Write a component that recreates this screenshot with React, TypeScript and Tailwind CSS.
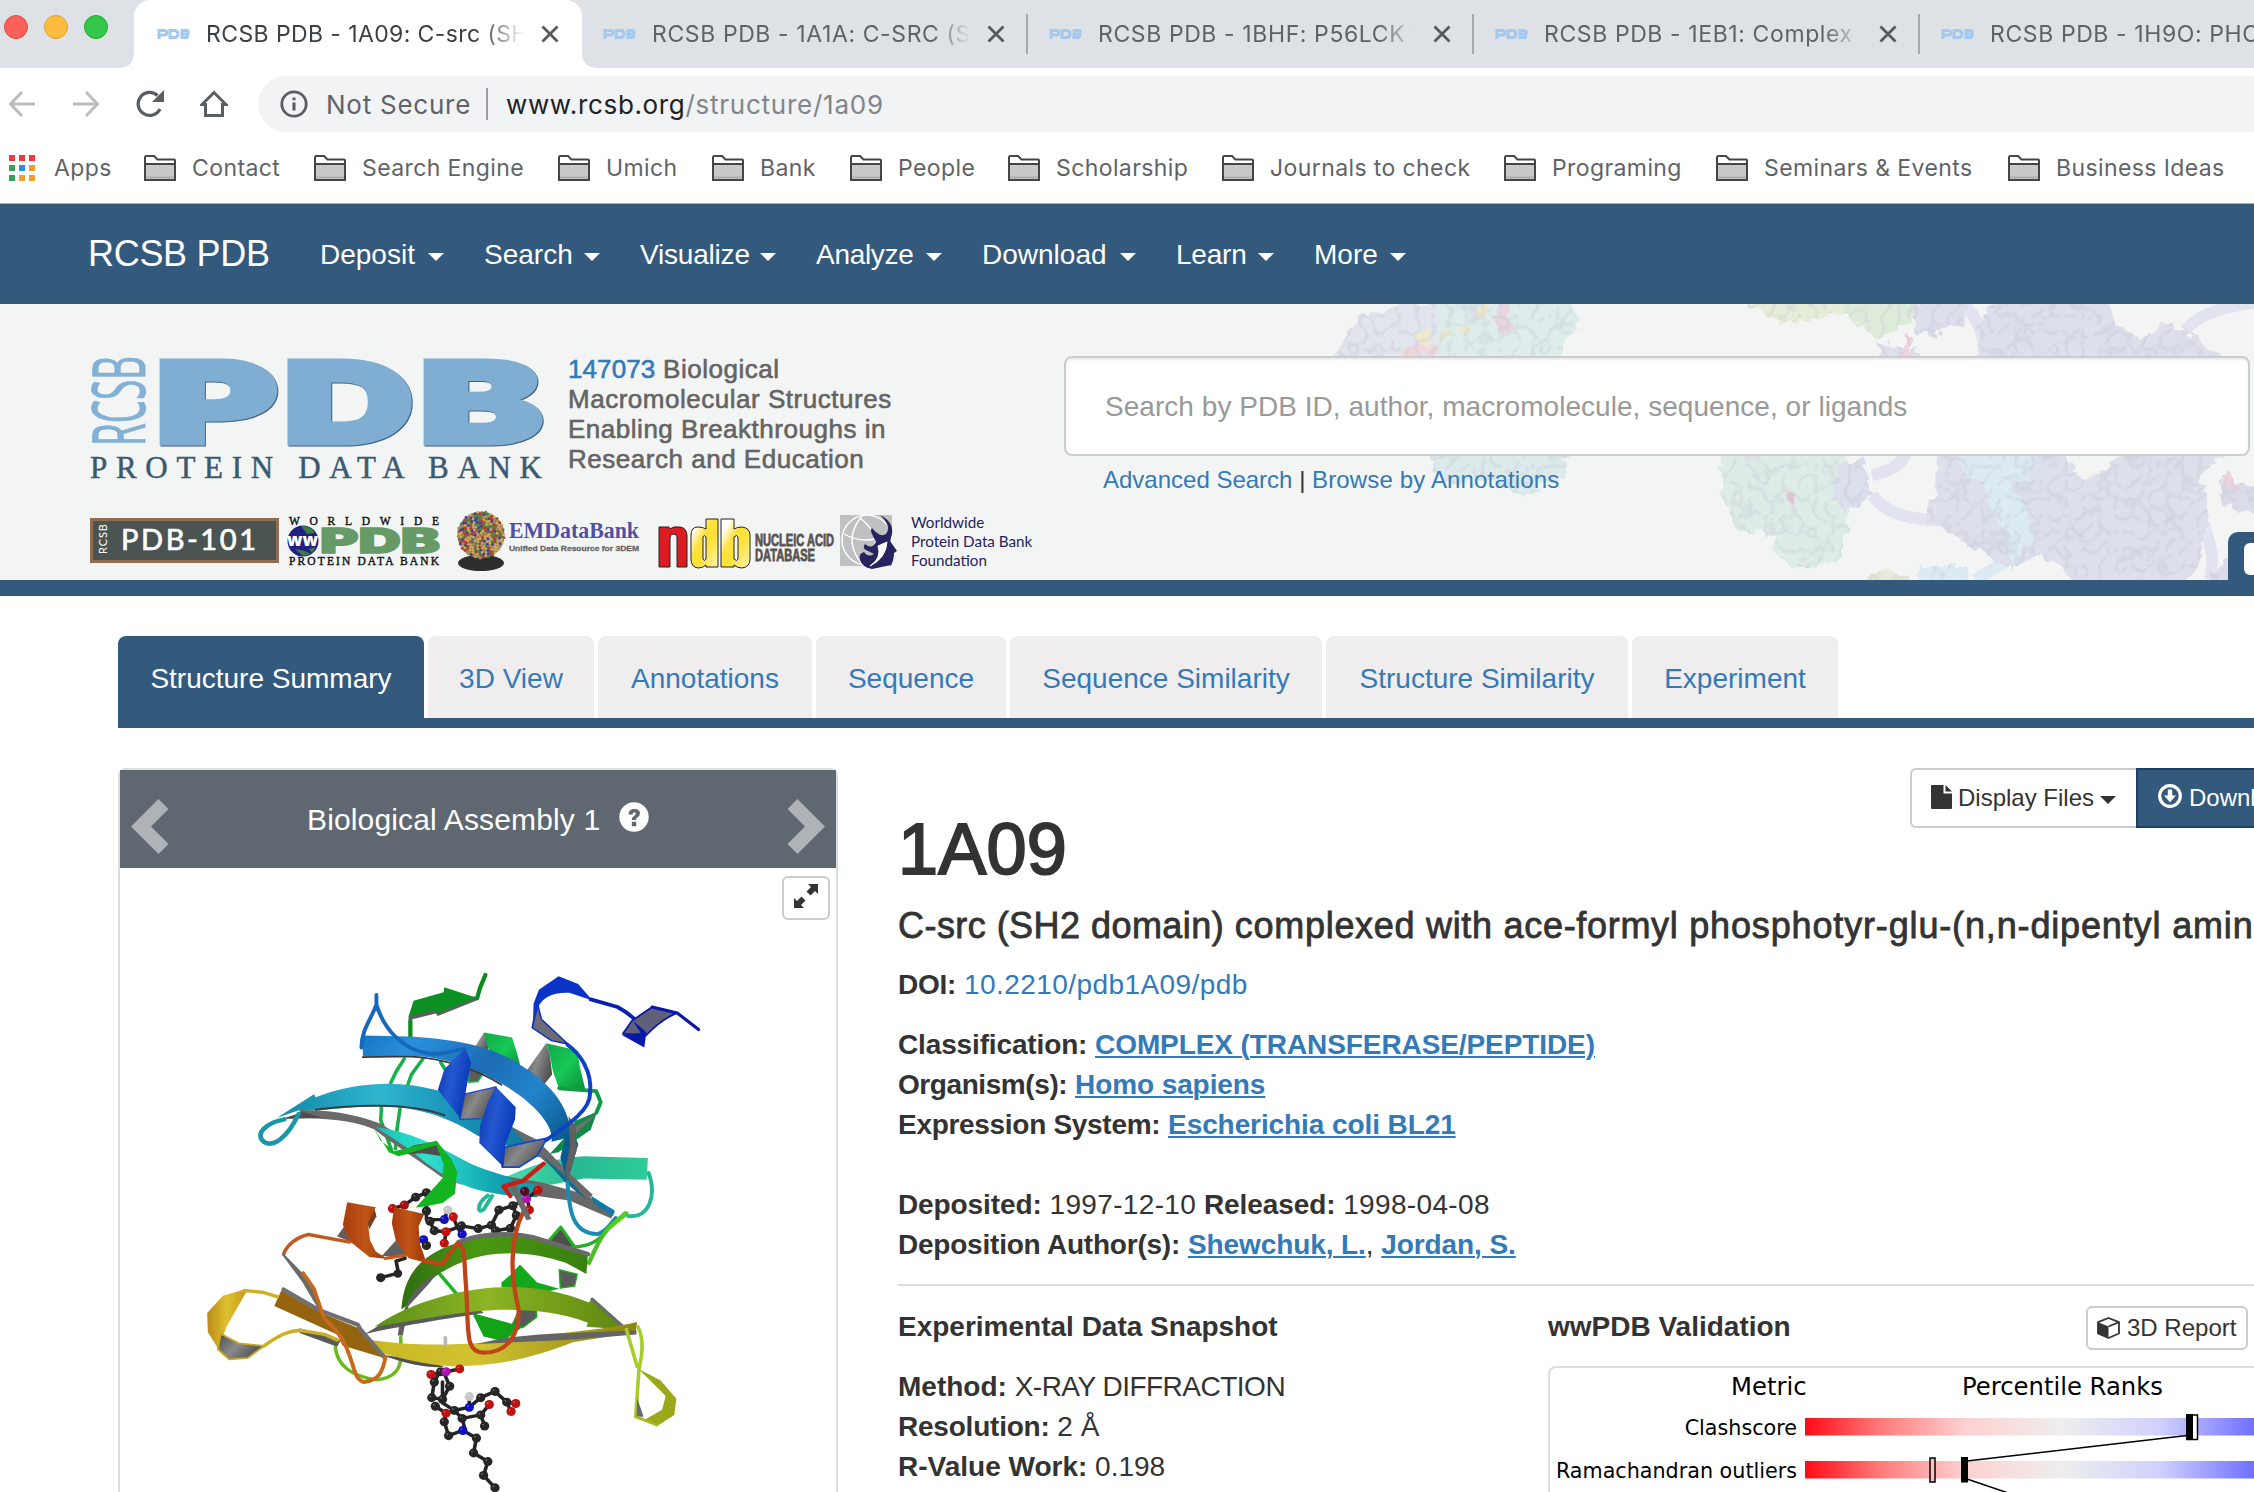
import React from "react";

const SANS = "font-['Liberation_Sans',Arial,sans-serif]";

/* ---------- Browser chrome ---------- */

const browserTabs = [
  "RCSB PDB - 1A09: C-src (SH2 dom",
  "RCSB PDB - 1A1A: C-SRC (SH2 DOM",
  "RCSB PDB - 1BHF: P56LCK SH2 D",
  "RCSB PDB - 1EB1: Complex struct",
  "RCSB PDB - 1H9O: PHOSPHATID",
];

function CloseIcon() {
  return (
    <svg className="h-[18px] w-[18px]" viewBox="0 0 18 18" fill="none" stroke="#55585c" strokeWidth="2.8">
      <path d="M1.5 1.5 16.5 16.5M16.5 1.5 1.5 16.5" />
    </svg>
  );
}

function PdbFavicon() {
  return (
    <svg className="h-[10px] w-[33px] shrink-0" viewBox="0 0 33 10" fill="none" stroke="#a3c9ee" strokeWidth="3">
      <path d="M2 10V1.500H7.500a2 2 0 0 1 0 4.500H2M13 1.500V8.500H18q3-.500 3-3.500t-3-3.500ZM25 1.500V8.500H29.500a1.800 1.800 0 0 0 0-3.500 1.700 1.700 0 0 0 0-3.500ZM25 5h5" />
    </svg>
  );
}

function TabStrip() {
  return (
    <div className="flex h-[68px] w-[2400px] shrink-0 bg-[#dee1e6]">
      <div className="flex w-[118px] shrink-0 gap-4 pl-1 pt-[15px]">
        <span className="h-6 w-6 shrink-0 rounded-full border border-[#e2463f] bg-[#fc605b]" />
        <span className="h-6 w-6 shrink-0 rounded-full border border-[#dfa023] bg-[#fdbc40]" />
        <span className="h-6 w-6 shrink-0 rounded-full border border-[#1dad2b] bg-[#34c84a]" />
      </div>
      {browserTabs.map((title, i) => (
        <div key={title} className={i === 0 ? "flex w-[480px] shrink-0" : "flex w-[446px] shrink-0"}>
          {i === 0 && (
            <svg className="h-[68px] w-4 shrink-0" viewBox="0 0 16 68">
              <path d="M0 68Q16 68 16 52V0V68Z" fill="#fff" />
            </svg>
          )}
          <div
            className={
              i === 0
                ? "flex h-[68px] w-[448px] shrink-0 items-center rounded-t-[16px] bg-white pl-[23px] text-[#3c4043]"
                : "flex h-[68px] w-[446px] shrink-0 items-center pl-[5px] text-[#5f6368]"
            }
          >
            <PdbFavicon />
            <span
              className={
                i === 0
                  ? "ml-4 w-[318px] shrink-0 overflow-hidden whitespace-nowrap font-['Inter',sans-serif] text-[23px] tracking-[0.4px] [mask-image:linear-gradient(to_right,#000_86%,transparent_100%)]"
                  : "ml-4 w-[318px] shrink-0 overflow-hidden whitespace-nowrap font-['Inter',sans-serif] text-[23px] tracking-[0.6px] [mask-image:linear-gradient(to_right,#000_88%,transparent_100%)]"
              }
            >
              {title}
            </span>
            <span className="ml-[17px]">
              <CloseIcon />
            </span>
            {i > 0 && <span className="ml-[21px] h-10 w-[2px] bg-[#a4a7ab]" />}
          </div>
          {i === 0 && (
            <svg className="h-[68px] w-4 shrink-0" viewBox="0 0 16 68">
              <path d="M16 68Q0 68 0 52V0V68Z" fill="#fff" />
            </svg>
          )}
        </div>
      ))}
    </div>
  );
}

function Toolbar() {
  return (
    <div className="flex h-[64px] w-[2400px] shrink-0 items-start bg-white pt-2 font-['Inter',sans-serif]">
      <div className="flex h-14 w-[258px] items-center pl-[8px]">
        <svg className="h-7 w-7" viewBox="0 0 28 28" fill="none" stroke="#babcbe" strokeWidth="3">
          <path d="M27 14H3M14 2 2.500 14 14 26" />
        </svg>
        <svg className="ml-9 h-7 w-7" viewBox="0 0 28 28" fill="none" stroke="#babcbe" strokeWidth="3">
          <path d="M1 14H25M14 2 25.500 14 14 26" />
        </svg>
        <svg className="ml-9 h-7 w-7" viewBox="0 0 28 28" fill="none" stroke="#5a5d61" strokeWidth="3.300">
          <path d="M24 19A11.500 11.500 0 1 1 21.500 5.500" />
          <path d="M28 0V12H16Z" fill="#5a5d61" stroke="none" />
        </svg>
        <svg className="ml-9 h-7 w-7" viewBox="0 0 28 28" fill="none" stroke="#5a5d61" strokeWidth="3">
          <path d="M2 14.500 14 2.500 26 14.500H22.500V25.500H5.500V14.500Z" />
        </svg>
      </div>
      <div className="flex h-14 flex-1 items-center rounded-l-full bg-[#f1f3f4] pl-[22px] text-[26px] tracking-[0.75px] text-[#5f6368]">
        <svg className="h-7 w-7 shrink-0" viewBox="0 0 28 28" fill="none" stroke="#5a5d61" strokeWidth="2.800">
          <circle cx="14" cy="14" r="12.200" />
          <path d="M14 12.500V20.500M14 7.500V10.300" strokeWidth="3" />
        </svg>
        <span className="ml-[18px] w-[160px] whitespace-nowrap">Not Secure</span>
        <span className="h-8 w-[2px] bg-[#9a9da1]" />
        <span className="ml-[18px] whitespace-nowrap text-[#80868b]">
          <span className="tracking-[0.65px] text-[#202124]">www.rcsb.org</span>/structure/1a09
        </span>
      </div>
    </div>
  );
}

const bookmarks: [string, string][] = [
  ["Contact", "w-[121px]"],
  ["Search Engine", "w-[195px]"],
  ["Umich", "w-[105px]"],
  ["Bank", "w-[89px]"],
  ["People", "w-[109px]"],
  ["Scholarship", "w-[165px]"],
  ["Journals to check", "w-[233px]"],
  ["Programing", "w-[163px]"],
  ["Seminars & Events", "w-[243px]"],
  ["Business Ideas", "w-[200px]"],
];

function BookmarkBar() {
  const dots = ["#ee3a38", "#ee3a38", "#ee3a38", "#35a35a", "#2a8cf0", "#eda02a", "#35a35a", "#eda02a", "#eda02a"];
  return (
    <div className="flex h-[72px] w-[2400px] shrink-0 items-center border-b border-[#b2b2b2] bg-white font-['Inter',sans-serif] text-[23px] tracking-[0.4px] text-[#5f6368]">
      <svg className="ml-[9px] h-[26px] w-[26px]" viewBox="0 0 26 26">
        {dots.map((c, i) => (
          <rect key={i} x={(i % 3) * 10} y={Math.floor(i / 3) * 10} width="6" height="6" fill={c} />
        ))}
      </svg>
      <span className="ml-[19px] w-[90px] pt-[2px]">Apps</span>
      {bookmarks.map(([label, width]) => (
        <React.Fragment key={label}>
          <svg className="h-[26px] w-8 shrink-0" viewBox="0 0 32 26" stroke="#454545" strokeWidth="2">
            <path d="M1 24V2.500Q1 1 2.500 1H10L13.500 4.500H30Q31 4.500 31 5.500V24Z" fill="#fff" />
            <path d="M1 9H31V25H1Z" fill="#c8c8c8" />
            <path d="M2 22.500H30" stroke="#adadad" strokeWidth="1.600" />
          </svg>
          <span className={`ml-[16px] mr-px shrink-0 whitespace-nowrap pt-[2px] ${width}`}>{label}</span>
        </React.Fragment>
      ))}
    </div>
  );
}

/* ---------- Site navigation ---------- */

function Caret({ className }: { className?: string }) {
  return (
    <svg className={`h-2 w-4 shrink-0 ${className ?? ""}`} viewBox="0 0 16 8" fill="currentColor">
      <path d="M0 0H16L8 8Z" />
    </svg>
  );
}

function NavBar() {
  const items: [string, string][] = [
    ["Deposit", "w-[124px]"],
    ["Search", "w-[116px]"],
    ["Visualize", "w-[136px] tracking-[-0.2px]"],
    ["Analyze", "w-[126px] tracking-[-0.3px]"],
    ["Download", "w-[154px]"],
    ["Learn", "w-[98px] tracking-[-0.2px]"],
    ["More", "w-[92px]"],
  ];
  return (
    <nav className="flex h-[100px] shrink-0 items-center bg-[#33597d] pl-[88px] text-white">
      <span className="w-[232px] text-[36px] tracking-[-0.3px]">RCSB PDB</span>
      <div className="flex gap-10 pt-[2px]">
        {items.map(([item, width]) => (
          <span key={item} className={`flex items-center justify-between whitespace-nowrap text-[28px] ${width}`}>
            {item}
            <Caret className="mt-[3px]" />
          </span>
        ))}
      </div>
    </nav>
  );
}

/* ---------- Header artwork ---------- */

function MoleculeBackdrop() {
  return (
    <svg className="absolute inset-0 h-[276px] w-[2254px]" viewBox="0 304 2254 276">
      <defs>
        <filter id="surface" x="-5%" y="-5%" width="110%" height="110%">
          <feTurbulence type="fractalNoise" baseFrequency="0.09" numOctaves="2" seed="4" result="n" />
          <feDisplacementMap in="SourceGraphic" in2="n" scale="16" xChannelSelector="R" yChannelSelector="G" result="d" />
          <feTurbulence type="turbulence" baseFrequency="0.06" numOctaves="2" seed="9" result="t" />
          <feColorMatrix in="t" type="matrix" values="0 0 0 0 0.5  0 0 0 0 0.52  0 0 0 0 0.58  -1.600 0 0 0 0.38" result="c" />
          <feComposite in="c" in2="d" operator="in" result="veins" />
          <feMerge>
            <feMergeNode in="d" />
            <feMergeNode in="veins" />
          </feMerge>
        </filter>
      </defs>
      <g fill="none" stroke="#e1e4ee" strokeWidth="12">
        <path d="M1965 306Q1985 325 1984 356" />
        <path d="M2185 330Q2205 308 2254 303" />
        <path d="M1872 475Q1900 470 1906 452M1872 495Q1890 520 1940 520" />
        <path d="M2205 530Q2216 555 2210 580" />
      </g>
      <path d="M1975 580L2005 562" stroke="#dcebf3" strokeWidth="12" />
      <g filter="url(#surface)">
        <path d="M1333 362L1342 338 1362 316 1400 306 1450 300V362Z" fill="#e2e4ee" />
        <path d="M1440 300H1568L1580 326 1562 340V362H1436Z" fill="#dfecec" />
        <path d="M1426 450H1570L1564 478 1522 494 1490 482 1440 480Z" fill="#dceaeb" />
        <path d="M1745 300H1845V310L1810 322 1775 320Z" fill="#e6edd9" />
        <path d="M1838 300H1922L1912 322 1880 338 1852 322Z" fill="#deebda" />
        <path d="M1916 300H1966L1964 326 1934 334 1914 332Z" fill="#dde0eb" />
        <path d="M1876 342L1920 350V362H1884Z" fill="#dde0eb" />
        <path d="M1990 300H2106L2122 330 2145 338 2166 324 2192 334 2224 358V364H1976L1980 330Z" fill="#dde0eb" />
        <path d="M1720 450H1846L1848 520 1840 556 1808 572 1782 562 1768 534 1736 530 1724 500Z" fill="#deece8" />
        <path d="M1838 462L1862 458 1872 490 1854 510 1834 500Z" fill="#dcdfec" />
        <path d="M1940 450H2064L2084 480 2110 466 2130 450H2230L2200 475 2208 520 2200 560 2180 590H2076L2064 566 2040 554 2008 566 1976 550 1930 520Z" fill="#dde0eb" />
        <path d="M1950 450H2036L2030 480 2004 480 2022 500 2034 538 2012 570 2006 538 1984 490Z" fill="#dcebf2" />
        <path d="M1918 566H1966L1974 590H1918Z" fill="#dcebf3" />
        <path d="M1866 580L1884 568 1916 582V590H1860Z" fill="#e4ebd6" />
        <path d="M2222 480L2260 486V516L2220 504Z" fill="#dadde9" />
        <path d="M2210 574L2230 560V590H2206Z" fill="#dadde9" />
      </g>
      <g filter="url(#surface)">
        <path d="M1404 356Q1414 348 1432 350" stroke="#f2d7dc" strokeWidth="9" strokeLinecap="round" />
        <path d="M1504 310V328" stroke="#e8d5e2" strokeWidth="12" strokeLinecap="round" />
        <path d="M1908 340V354" stroke="#eed3df" strokeWidth="8" strokeLinecap="round" />
        <path d="M2226 476L2236 488" stroke="#eed3df" strokeWidth="8" strokeLinecap="round" />
        <circle cx="1792" cy="500" r="5" fill="#e8c5d4" />
        <g fill="#efe9cc">
          <circle cx="1424" cy="338" r="7" />
          <circle cx="1445" cy="336" r="5" />
          <circle cx="1466" cy="328" r="5" />
          <circle cx="1482" cy="312" r="5" />
        </g>
      </g>
    </svg>
  );
}

function PdbLogo() {
  return (
    <svg className="h-[130px] w-[460px] shrink-0" viewBox="0 0 460 130">
      <text
        transform="translate(56 92) rotate(-90)"
        fontFamily="Open Sans"
        fontSize="74"
        fill="#83b0d5"
        stroke="#83b0d5"
        textLength="90"
        lengthAdjust="spacingAndGlyphs"
      >
        RCSB
      </text>
      <g
        className="[filter:drop-shadow(1.5px_1.5px_0.5px_#3f6284)]"
        fill="#80aed3"
        stroke="#80aed3"
        strokeWidth="5"
        fontFamily="Inter"
        fontWeight="900"
        fontSize="113"
      >
        <text x="66" y="88.500" textLength="123" lengthAdjust="spacingAndGlyphs">P</text>
        <text x="194" y="88.500" textLength="131" lengthAdjust="spacingAndGlyphs">D</text>
        <text x="330" y="88.500" textLength="124" lengthAdjust="spacingAndGlyphs">B</text>
      </g>
      <text x="1" y="124" fontFamily="Liberation Serif" fontSize="31" fill="#3b5a72" stroke="#3b5a72" strokeWidth="0.500" textLength="452">
        PROTEIN DATA BANK
      </text>
    </svg>
  );
}

const virusColors = ["#b08b5a", "#c03030", "#3c8c3c", "#3b3ba8", "#d8b04a", "#8c5a3c", "#c8a878"];
const virusDots = Array.from({ length: 260 }, (_, i) => {
  const r = 23.5 * Math.sqrt((i + 0.5) / 260);
  const a = i * 2.39996;
  const hash = Math.abs(Math.sin(i * 78.233) * 43758.5453);
  return { x: 25 + r * Math.cos(a), y: 25 + r * Math.sin(a), c: virusColors[Math.floor(hash) % 7] };
});

function PartnerLogos() {
  return (
    <div className="flex h-[66px] items-start">
      <svg className="ml-px mt-[8px] h-[47px] w-[190px]" viewBox="0 0 190 47">
        <rect x="1.500" y="2.500" width="186" height="42" fill="#4b5450" stroke="#8f6d50" strokeWidth="3" />
        <text transform="translate(17 37) rotate(-90)" fontFamily="Lato" fontSize="11" fill="#fff" textLength="30">
          RCSB
        </text>
        <text x="31" y="33" fontFamily="Lato" fontSize="29" fill="#fff" stroke="#fff" strokeWidth="0.700" textLength="135">
          PDB-101
        </text>
      </svg>
      <svg className="ml-[7px] mt-[7px] h-[50px] w-[154px]" viewBox="0 0 154 50">
        <g fontFamily="Liberation Serif" fontSize="11.500" fill="#111" stroke="#111" strokeWidth="0.400">
          <text x="2" y="9" textLength="150">WORLDWIDE</text>
          <text x="2" y="49" textLength="150">PROTEIN DATA BANK</text>
        </g>
        <circle cx="16" cy="25" r="15.500" fill="#1f1f86" />
        <path d="M14 10q10-1 14 7l-8 1ZM8 33l10 2 6 3-8 2ZM22 33l7-2-4 6Z" fill="#3d7a44" />
        <text x="0" y="30" fontFamily="Open Sans" fontWeight="800" fontSize="17" fill="#fff" textLength="31" lengthAdjust="spacingAndGlyphs">
          ww
        </text>
        <g fontFamily="Inter" fontWeight="900" fontSize="34" fill="#669a66" stroke="#669a66" strokeWidth="1.500">
          <text x="33" y="36.500" textLength="120" lengthAdjust="spacingAndGlyphs">PDB</text>
        </g>
      </svg>
      <svg className="ml-[15px] mt-px h-[64px] w-[190px]" viewBox="0 0 190 64">
        <ellipse cx="25" cy="53" rx="23" ry="8" fill="#2e2e2e" />
        <circle cx="25" cy="25" r="23.500" fill="#8a7450" />
        {virusDots.map((d, i) => (
          <circle key={i} cx={d.x} cy={d.y} r="1.300" fill={d.c} />
        ))}
        <text x="53" y="28" fontFamily="Liberation Serif" fontWeight="700" fontSize="23" fill="#4f4fa5" textLength="130" lengthAdjust="spacingAndGlyphs">
          EMDataBank
        </text>
        <text x="53" y="41" fontFamily="Liberation Sans" fontWeight="700" fontSize="8" fill="#666" stroke="#666" strokeWidth="0.300" textLength="130" lengthAdjust="spacingAndGlyphs">
          Unified Data Resource for 3DEM
        </text>
      </svg>
      <svg className="ml-[12px] mt-[7px] h-[54px] w-[178px]" viewBox="0 0 178 54">
        <defs>
          <linearGradient id="ndbGold" x1="0" y1="0" x2="1" y2="1">
            <stop offset="0.150" stopColor="#fff" />
            <stop offset="0.400" stopColor="#ffe13a" />
            <stop offset="0.600" stopColor="#ffe13a" />
            <stop offset="1" stopColor="#fff6b8" />
          </linearGradient>
        </defs>
        <path d="M1 51V11H11L12 13Q15 10 22 11 29 12 29 20V51H19V21Q19 18 15 18 12 18 12 22V51Z" fill="#db1c22" stroke="#222" />
        <path d="M48 3H60V51H48V49Q45 52 40 52 33 51 33 43V19Q33 11 40 11 45 11 48 13ZM45 21V43Q46 46 48 43V21Q46 18 45 21Z" fill="url(#ndbGold)" stroke="#222" fillRule="evenodd" />
        <path d="M63 3H76V13Q79 11 84 11 92 12 92 19V43Q92 51 84 52 79 52 76 49V51H63ZM76 21V43Q79 46 80 43V21Q79 18 76 21Z" fill="url(#ndbGold)" stroke="#222" fillRule="evenodd" />
        <g fontFamily="Liberation Sans" fontWeight="700" fontSize="16.500" fill="#565453" stroke="#565453" strokeWidth="0.800">
          <text x="97" y="30" textLength="79" lengthAdjust="spacingAndGlyphs">NUCLEIC ACID</text>
          <text x="97" y="45" textLength="60" lengthAdjust="spacingAndGlyphs">DATABASE</text>
        </g>
      </svg>
      <svg className="ml-[4px] mt-[5px] h-[56px] w-[60px]" viewBox="0 0 60 56">
        <rect x="0" y="1" width="52" height="51" fill="#bfc0c2" />
        <g fill="none" stroke="#fff" strokeWidth="1.400">
          <circle cx="27" cy="26" r="25" />
          <path d="M4 20Q25 32 50 20M22 2Q2 26 22 50M20 4Q40 20 34 34" />
        </g>
        <path d="M40 1Q54 8 52 20L50 27 57 37 54 39Q54 46 51 51L32 55Q22 53 20 46 18 40 24 38 28 44 34 40L26 36Q22 34 25 30 32 36 36 28L32 20Q30 16 32 14 40 24 46 20 52 12 40 1Z" fill="#26235e" />
        <path d="M47 28Q46 44 30 52 42 44 38 32Z" fill="#fff" stroke="#fff" />
      </svg>
      <div className="ml-[11px] mt-[4px] flex w-[130px] flex-col whitespace-nowrap font-['Lato',sans-serif] text-[15.2px] leading-[19px] text-[#26235e]">
        <span>Worldwide</span>
        <span>Protein Data Bank</span>
        <span>Foundation</span>
      </div>
    </div>
  );
}

function SiteHeader() {
  return (
    <header className="relative flex h-[292px] shrink-0 overflow-hidden border-b-[16px] border-[#33597d] bg-[#f3f5f4]">
      <MoleculeBackdrop />
      <div className="relative flex w-[1064px] shrink-0 flex-col pl-[89px] pt-[50px]">
        <div className="flex h-[155px]">
          <PdbLogo />
          <p className="ml-[19px] w-[380px] text-[26px] leading-[30px] tracking-[0.52px] text-[#646464] [-webkit-text-stroke:0.6px]">
            <span className="tracking-[0.1px] text-[#337ab7]">147073</span> Biological
            <br />
            Macromolecular Structures
            <br />
            Enabling Breakthroughs in
            <br />
            Research and Education
          </p>
        </div>
        <PartnerLogos />
      </div>
      <div className="relative flex flex-1 flex-col pt-[52px]">
        <div className="flex h-[100px] w-[1186px] items-center rounded-[8px] border-2 border-[#ccc] bg-white pl-[39px] pt-[2px] text-[28px] tracking-[0.04px] text-[#999] shadow-[inset_0_2px_2px_rgba(0,0,0,0.075)]">
          Search by PDB ID, author, macromolecule, sequence, or ligands
        </div>
        <div className="mt-[9px] pl-[39px] text-[24px] leading-[30px] text-[#333]">
          <span className="text-[#337ab7]">Advanced Search</span> |{" "}
          <span className="tracking-[0.15px] text-[#337ab7]">Browse by Annotations</span>
        </div>
      </div>
      <div className="absolute bottom-0 right-0 flex h-12 w-[26px] justify-end rounded-tl-[10px] bg-[#33597d] pt-[11px]">
        <span className="h-8 w-[10px] rounded-l-[6px] bg-white" />
      </div>
    </header>
  );
}

/* ---------- Structure tabs ---------- */

function StructureTabs() {
  const tabs: [string, string][] = [
    ["3D View", "w-[166px]"],
    ["Annotations", "w-[214px]"],
    ["Sequence", "w-[190px]"],
    ["Sequence Similarity", "w-[312px]"],
    ["Structure Similarity", "w-[302px]"],
    ["Experiment", "w-[206px]"],
  ];
  return (
    <div className="ml-[118px] mt-10 flex h-[92px] shrink-0 gap-1 border-b-[10px] border-[#33597d] text-[28px] text-[#337ab7]">
      <span className="flex w-[306px] items-center justify-center rounded-t-[8px] bg-[#33597d] pt-[4px] text-white">Structure Summary</span>
      {tabs.map(([label, width]) => (
        <span key={label} className={`flex items-center justify-center rounded-t-[8px] bg-[#efedee] pt-[4px] ${width}`}>
          {label}
        </span>
      ))}
    </div>
  );
}

/* ---------- Ribbon drawing of the protein ---------- */

type Atom = [number, number, string];

const upperAtoms: Atom[] = [
  [595, 748, "#c01010"], [628, 738, "#a01010"], [660, 715, "#262626"], [690, 702, "#262626"], [690, 755, "#262626"],
  [700, 785, "#262626"], [740, 780, "#1010c0"], [750, 752, "#c8c8c8"], [712, 812, "#262626"], [745, 815, "#c01010"],
  [765, 772, "#c01010"], [788, 798, "#262626"], [790, 822, "#1010c0"], [740, 848, "#c01010"], [835, 806, "#262626"],
  [872, 796, "#262626"], [893, 752, "#262626"], [932, 740, "#262626"], [942, 768, "#262626"], [925, 805, "#262626"],
  [884, 812, "#262626"], [970, 720, "#b010b0"], [1002, 695, "#c01010"], [965, 698, "#501020"], [978, 752, "#c01010"],
  [682, 838, "#1010c0"], [690, 855, "#262626"],
];
const upperBonds =
  "M595 748L628 738 660 715 690 702M690 740V780L740 780 750 752M700 785L712 812 745 815 788 798 835 806 872 796 893 752 932 740 942 768 925 805 884 812 872 796M765 772L775 798 790 825M745 815L740 848M932 740L970 720 1002 695M970 700L978 752M682 838L690 855";

const lowerAtoms: Atom[] = [
  [703, 1228, "#c01010"], [730, 1220, "#262626"], [745, 1220, "#b010b0"], [783, 1212, "#c01010"], [755, 1262, "#262626"],
  [712, 1250, "#262626"], [705, 1295, "#262626"], [735, 1300, "#262626"], [715, 1320, "#262626"], [745, 1340, "#c01010"],
  [740, 1365, "#262626"], [752, 1405, "#262626"], [768, 1332, "#262626"], [790, 1355, "#262626"], [792, 1390, "#1010c0"],
  [810, 1323, "#1010c0"], [810, 1292, "#c8c8c8"], [842, 1295, "#262626"], [882, 1277, "#262626"], [915, 1308, "#262626"],
  [940, 1312, "#c01010"], [927, 1335, "#c01010"], [866, 1315, "#c01010"], [842, 1345, "#262626"], [853, 1377, "#262626"],
  [830, 1412, "#262626"], [822, 1455, "#262626"], [862, 1480, "#262626"], [850, 1520, "#262626"], [882, 1556, "#262626"],
];
const lowerBonds =
  "M703 1228L745 1220 783 1212M730 1215L712 1250 705 1295 735 1300 755 1262 740 1225M735 1250V1310L768 1332 810 1323 842 1295 882 1277 915 1308 940 1312M915 1308L927 1335M715 1320L745 1340 740 1365 752 1405 792 1390 830 1412 822 1455 862 1480 850 1520 882 1556M790 1355L842 1345 866 1315M842 1345L853 1377M768 1332L790 1355 800 1395M810 1323V1292";

function Ligand({ atoms, bonds }: { atoms: Atom[]; bonds: string }) {
  return (
    <g>
      <path d={bonds} fill="none" stroke="#242424" strokeWidth="10" strokeLinejoin="round" />
      {atoms.map(([x, y, c], i) => (
        <g key={i}>
          <circle cx={x} cy={y} r="13" fill={c} />
          <circle cx={x - 4} cy={y - 4} r="2.500" fill="#fff" opacity="0.350" />
        </g>
      ))}
    </g>
  );
}

function ProteinRibbon() {
  return (
    <svg className="h-[542px] w-[560px]" viewBox="0 0 1568 1568" preserveAspectRatio="none" strokeLinejoin="round" strokeLinecap="round">
      <defs>
        <linearGradient id="azure" x1="0" y1="0" x2="1" y2="0.600">
          <stop offset="0" stopColor="#1576c4" />
          <stop offset="0.200" stopColor="#2a8fdc" />
          <stop offset="0.500" stopColor="#1b6cb4" />
          <stop offset="0.750" stopColor="#2384cc" />
          <stop offset="1" stopColor="#0a5a90" />
        </linearGradient>
        <linearGradient id="cyan">
          <stop offset="0" stopColor="#1287a8" />
          <stop offset="0.350" stopColor="#2fb6cf" />
          <stop offset="0.600" stopColor="#1a93b8" />
          <stop offset="1" stopColor="#0b6a8c" />
        </linearGradient>
        <linearGradient id="teal">
          <stop offset="0" stopColor="#18c0b4" />
          <stop offset="0.300" stopColor="#30e0d0" />
          <stop offset="0.700" stopColor="#12a8b4" />
          <stop offset="1" stopColor="#0c86a0" />
        </linearGradient>
        <linearGradient id="aqua">
          <stop offset="0" stopColor="#48e0b0" />
          <stop offset="0.500" stopColor="#28b892" />
          <stop offset="1" stopColor="#30cc98" />
        </linearGradient>
        <linearGradient id="royal" x1="0" y1="0" x2="1" y2="0.400">
          <stop offset="0" stopColor="#0a35b0" />
          <stop offset="0.500" stopColor="#2458d0" />
          <stop offset="1" stopColor="#0838b8" />
        </linearGradient>
        <linearGradient id="steel" x1="0" y1="0" x2="1" y2="0.500">
          <stop offset="0" stopColor="#4a4a4a" />
          <stop offset="0.500" stopColor="#8a8a8a" />
          <stop offset="1" stopColor="#505050" />
        </linearGradient>
        <linearGradient id="leaf">
          <stop offset="0" stopColor="#2f6e10" />
          <stop offset="0.400" stopColor="#4a9812" />
          <stop offset="1" stopColor="#3a8010" />
        </linearGradient>
        <linearGradient id="olive">
          <stop offset="0" stopColor="#5c9018" />
          <stop offset="0.450" stopColor="#8cb424" />
          <stop offset="1" stopColor="#5e8810" />
        </linearGradient>
        <linearGradient id="gold">
          <stop offset="0" stopColor="#c8b820" />
          <stop offset="0.400" stopColor="#d2c232" />
          <stop offset="1" stopColor="#8c8410" />
        </linearGradient>
        <linearGradient id="emerald" x1="0" y1="0" x2="1" y2="1">
          <stop offset="0" stopColor="#10a848" />
          <stop offset="0.500" stopColor="#16c854" />
          <stop offset="1" stopColor="#0c8a38" />
        </linearGradient>
        <linearGradient id="amber">
          <stop offset="0" stopColor="#b88a18" />
          <stop offset="0.500" stopColor="#e0c030" />
          <stop offset="1" stopColor="#c49c18" />
        </linearGradient>
        <linearGradient id="rust">
          <stop offset="0" stopColor="#a83c0c" />
          <stop offset="0.500" stopColor="#c05416" />
          <stop offset="1" stopColor="#983808" />
        </linearGradient>
      </defs>

      {/* green strand, helix and loops at the back */}
      <path d="M640 203L716 184 722 191 834 145 826 134 640 190Z" fill="#5e5e5e" />
      <path d="M640 192L654 147 738 122 740 108 832 139 722 183 712 176Z" fill="#0b9024" />
      <path d="M832 139L840 110 855 72M645 205V252" fill="none" stroke="#0b8c1e" strokeWidth="12" />
      <g fill="none" stroke="#18b04a" strokeWidth="10">
        <path d="M628 315L606 350 590 385M680 315L648 360 638 390M564 455L562 492 592 578M616 460L608 515 603 575M730 325L745 350" />
      </g>
      <path d="M820 290L850 241 868 268 858 300Z" fill="url(#steel)" />
      <path d="M850 239L930 253 944 300 957 350 900 330 868 300Z" fill="url(#emerald)" />
      <path d="M808 340L852 352 834 380 808 382Z" fill="#5c5c5c" stroke="#14b04a" strokeWidth="5" />
      <path d="M970 350L1025 270 1036 305 1042 360 1015 395Z" fill="url(#steel)" />
      <path d="M1025 270L1112 290 1120 340 1136 408 1060 398 1044 350 1036 305Z" fill="url(#emerald)" />
      <path d="M1062 400L1165 408 1178 440 1166 470" fill="none" stroke="#109c44" strokeWidth="11" />
      <path d="M1168 468L1105 495 1098 520 1035 590 1060 585 1150 520Z" fill="#108a48" />
      <path d="M1168 474L1110 530 1100 515Z" fill="#707070" />

      {/* aquamarine strand */}
      <path d="M912 657C985 622 1045 604 1130 597L1310 602 1307 665 1130 661C1080 670 1030 684 1000 682Z" fill="url(#aqua)" />
      <path d="M1312 645C1335 710 1315 775 1255 770M862 710C825 738 836 768 852 748L874 712" fill="none" stroke="#25b898" strokeWidth="11" />

      {/* teal strand */}
      <path d="M335 463C400 462 480 470 560 502L700 588 790 680 730 655C680 618 600 563 542 518C470 488 400 490 335 484Z" fill="#6a6a6a" />
      <path d="M548 512C640 525 710 560 790 605C850 640 920 655 1010 680L1000 715C900 712 840 700 780 674C730 650 680 610 640 575Z" fill="url(#teal)" />
      <path d="M915 655L1010 672 1130 705 1215 752 1208 777 1090 725 1000 712Z" fill="#686868" />
      <path d="M940 668L1000 680 990 712 930 706Z" fill="#149cac" />
      <path d="M1150 710L1218 755 1212 770 1160 735Z" fill="#127aa8" />

      {/* cyan strand */}
      <path d="M285 489L345 468 400 486Z" fill="#4e4e4e" />
      <path d="M272 485L375 417 380 426C480 386 600 372 720 406C800 431 860 478 930 512L1010 570 1090 645 1080 660 1010 600 835 538C760 488 670 450 540 452C450 455 400 466 335 463Z" fill="url(#cyan)" />
      <path d="M380 462C480 448 640 440 740 478" fill="none" stroke="#3c3c3c" strokeWidth="6" />
      <path d="M332 475C300 545 260 572 235 555C208 533 240 500 292 490" fill="none" stroke="#1897a8" strokeWidth="13" />
      <path d="M925 510L1000 550 1090 645 1156 708 1140 722 1080 665 1010 600Z" fill="#6a6a6a" />
      <path d="M1010 590L1075 650 1140 722 1110 700 1075 668Z" fill="#0f6a90" />

      {/* azure strand */}
      <path d="M512 247L640 250C780 258 860 280 920 312C1010 365 1070 420 1090 500L1115 562 1085 672 1065 600 1078 545 1040 555C1050 505 980 430 880 375C830 345 740 308 640 306L512 308Z" fill="url(#azure)" />
      <path d="M512 310L640 308C740 312 840 350 900 390" fill="none" stroke="#383838" strokeWidth="5" />
      <path d="M1088 480L1108 510V562L1115 562 1085 672 1078 640 1092 570Z" fill="#606060" />
      <path d="M550 130V158C535 200 508 232 508 282M550 158C570 225 620 290 700 300C740 305 760 290 798 287" fill="none" stroke="#1668bc" strokeWidth="11" />
      <path d="M1085 672C1090 760 1100 820 1170 822C1190 815 1200 800 1220 775" fill="none" stroke="#1a8cb0" strokeWidth="11" />

      {/* royal blue helix */}
      <path d="M784 420L885 396 848 488 784 490Z" fill="url(#steel)" stroke="#1448cc" strokeWidth="4" />
      <path d="M798 285L815 325 800 410 786 488 722 404 740 345Z" fill="url(#royal)" />
      <path d="M902 572L1028 544 1000 595 950 628 902 628Z" fill="url(#steel)" stroke="#1448cc" strokeWidth="5" />
      <path d="M885 396L940 455 938 490 912 560 906 628 838 558 840 510 862 440Z" fill="url(#royal)" />
      <path d="M1025 550C1095 500 1150 460 1148 415C1155 350 1120 300 1085 274" fill="none" stroke="#1040c4" strokeWidth="11" />

      {/* navy terminus */}
      <path d="M1000 150L1012 200 1086 272 1040 262 986 225Z" fill="#6c6c76" stroke="#0a2cc0" strokeWidth="4" />
      <path d="M1060 76L1115 98 1155 146 1090 124C1040 122 1015 140 1003 165L988 225 990 155 1005 115Z" fill="#0a34c8" />
      <path d="M1150 143L1225 165C1270 190 1290 215 1304 240" fill="none" stroke="#0820b0" strokeWidth="11" />
      <path d="M1322 165L1392 182C1350 200 1325 225 1304 248L1240 242 1265 205Z" fill="#60607a" stroke="#0818a8" strokeWidth="5" />
      <path d="M1268 205L1306 238 1300 282 1236 245 1290 240Z" fill="#0818a8" />
      <path d="M1322 165L1392 182 1452 230" fill="none" stroke="#0818a8" strokeWidth="9" />

      <Ligand atoms={upperAtoms} bonds={upperBonds} />

      {/* green turn */}
      <path d="M608 592L655 565 720 553 730 596 680 588Z" fill="#4e4e4e" />
      <path d="M543 515L560 550 600 582 718 552 760 605 776 640 770 705 735 732 685 742 660 745 700 700 735 660 738 620 718 565 612 597 585 585Z" fill="#12b420" />

      {/* lower green strands */}
      <path d="M1030 845L1066 802 1106 860 1070 865Z" fill="#4e4e4e" stroke="#20b020" strokeWidth="9" />
      <path d="M1062 925L1112 938 1105 972 1065 978Z" fill="#5a5a5a" stroke="#20a820" strokeWidth="4" />
      <path d="M725 935L772 992M1100 860C1160 855 1180 835 1205 795" fill="none" stroke="#20b424" strokeWidth="10" />
      <path d="M900 962L925 940 952 910 1000 962 1062 980 1020 990 900 975Z" fill="#14a81c" />
      <path d="M950 1040H998V1062L960 1092 930 1085Z" fill="#5a5a5a" stroke="#14a814" strokeWidth="4" />
      <path d="M818 1050L960 1090 905 1132 850 1118Z" fill="#12a416" />
      <path d="M1145 905C1170 850 1180 810 1250 762" fill="none" stroke="#48c024" strokeWidth="12" />
      <path d="M1180 822L1245 754 1250 770 1200 812Z" fill="#54d018" />
      <path d="M620 1040C625 955 660 885 775 848C850 812 960 820 1010 838L1142 880 1138 937 1080 905C1010 880 940 870 860 882C760 900 680 960 640 1025Z" fill="url(#leaf)" />
      <path d="M780 845C860 812 960 820 1010 838L1142 880" fill="none" stroke="#6a6a6a" strokeWidth="13" />
      <path d="M720 935C670 960 620 1020 610 1115H624L640 1030 700 962Z" fill="#606060" />
      <path d="M618 1120L618 1172C620 1210 600 1240 550 1243C480 1235 440 1200 435 1150" fill="none" stroke="#6cb820" strokeWidth="10" />

      {/* olive arrow */}
      <path d="M515 1112C580 1095 720 1070 850 1050L830 1030 560 1085Z" fill="#5a5a5a" />
      <path d="M545 1090C600 1050 700 1000 830 982C950 965 1050 980 1145 1020L1152 1008 1244 1098 1138 1090 1142 1078C1040 1038 920 1036 830 1045C720 1058 640 1075 545 1090Z" fill="url(#olive)" />
      <path d="M1154 1010L1250 1098" stroke="#6a6a6a" strokeWidth="9" />

      {/* yellow strand */}
      <path d="M560 1170C640 1200 700 1210 740 1206L700 1190Z" fill="#505050" />
      <path d="M535 1128C640 1145 780 1145 880 1132C1000 1112 1180 1102 1280 1076L1276 1106 1100 1135C1000 1175 900 1205 760 1204C680 1200 620 1180 570 1168Z" fill="url(#gold)" />
      <path d="M830 1140C900 1120 1000 1110 1100 1108L1278 1100V1112L1080 1128Z" fill="#646464" />

      {/* amber arrow and left loop */}
      <path d="M335 1094L450 1130 440 1148 335 1108Z" fill="#5a5a5a" />
      <path d="M264 1030L284 984 385 1045 500 1094 576 1182 455 1144 440 1112Z" fill="#94640e" />
      <path d="M290 982L390 1042 498 1084 504 1096 572 1178" fill="none" stroke="#707070" strokeWidth="12" />
      <path d="M180 982L120 1000 76 1050 78 1105 108 1156 130 1090 185 990Z" fill="url(#amber)" />
      <path d="M114 1110L165 1138 236 1145 190 1180 138 1184 106 1155Z" fill="url(#steel)" stroke="#c8a820" strokeWidth="5" />
      <path d="M180 985L230 990 272 1003M236 1145C280 1112 305 1102 335 1100L405 1112 440 1128" fill="none" stroke="#ccb024" strokeWidth="10" />

      {/* right loop */}
      <path d="M1250 1098L1280 1205M1282 1090C1302 1130 1292 1180 1285 1215L1276 1350" fill="none" stroke="#a8cc28" strokeWidth="10" />
      <path d="M1284 1212L1345 1245 1390 1298 1384 1345 1335 1378 1300 1360 1350 1330 1360 1290Z" fill="#9aa81a" />
      <path d="M1278 1350L1280 1295 1298 1350Z" fill="#6a6a6a" />
      <path d="M1276 1350L1335 1374" stroke="#a8b820" strokeWidth="8" />

      {/* rust helix and loops */}
      <path d="M440 828L465 792 478 845Z" fill="#6a5a52" />
      <path d="M565 885L605 840 640 885Z" fill="#606060" />
      <path d="M545 750L550 770 530 808 522 780Z" fill="#7a3c1c" />
      <path d="M468 730L548 744 526 790 532 840 548 872 582 894 530 888 478 845 456 795Z" fill="url(#rust)" />
      <path d="M600 744L684 764 668 800 672 850 690 905 640 892 604 840 593 790Z" fill="url(#rust)" />
      <path d="M290 880C300 850 330 830 360 823L475 845M575 892L635 882" fill="none" stroke="#c05a20" strokeWidth="10" />
      <path d="M682 900L735 908 775 850C800 850 795 900 800 960C810 1100 795 1165 850 1165C920 1165 950 1110 948 1040C930 960 915 850 962 756" fill="none" stroke="#c0441a" strokeWidth="12" />
      <path d="M288 880L345 960 405 1065 372 975 340 935Z" fill="#6a6a6a" stroke="#6a6a6a" strokeWidth="5" />
      <path d="M345 935L375 980 402 1062 448 1115C490 1180 480 1240 515 1250C560 1245 568 1215 575 1180" fill="none" stroke="#c86a1c" strokeWidth="11" />
      <path d="M605 900L612 935 562 948M605 900L630 892" fill="none" stroke="#242424" strokeWidth="10" />
      <circle cx="562" cy="948" r="13" fill="#262626" />
      <circle cx="610" cy="936" r="12" fill="#262626" />

      {/* red terminus */}
      <path d="M920 680L940 676 984 778 970 782Z" fill="#6a6a6a" />
      <path d="M905 684L960 668 1018 618M910 690L925 712" fill="none" stroke="#cc1c14" strokeWidth="12" />

      <path d="M743 1122V1140" stroke="#b8b8b8" strokeWidth="10" />
      <Ligand atoms={lowerAtoms} bonds={lowerBonds} />
    </svg>
  );
}

function AssemblyPanel() {
  return (
    <div className="flex h-[740px] w-[720px] shrink-0 flex-col rounded-t-[8px] border-2 border-[#ddd] bg-white">
      <div className="flex h-[98px] shrink-0 items-center bg-[#5f6871] text-[30px] text-white">
        <svg className="ml-[11px] mt-[15px] h-[55px] w-[38px] shrink-0" viewBox="0 0 38 55" fill="#aeb3b7">
          <path d="M27.500 0 37.500 10 20 27.500 37.500 45 27.500 55 0 27.500Z" />
        </svg>
        <span className="ml-[138px] w-[312px] whitespace-nowrap pt-[1px] tracking-[0.15px]">Biological Assembly 1</span>
        <svg className="mb-[5px] h-[30px] w-[30px]" viewBox="0 0 30 30">
          <circle cx="15" cy="15" r="14.700" fill="#fff" />
          <path d="M9.500 12.500Q9.500 7 15.500 7 21 7.200 21 11.300 21 14 18 15.800 17 16.500 17 18H12.700Q12.500 15.500 15 14 17 12.800 16.800 11.700 16.500 10.300 15.200 10.300 13.700 10.400 13.600 12.500ZM12.800 19.700H17.200V24.300H12.800Z" fill="#5f6871" />
        </svg>
        <svg className="ml-[138px] mt-[15px] h-[55px] w-[38px] shrink-0" viewBox="0 0 38 55" fill="#aeb3b7">
          <path d="M10.500 0 .500 10 18 27.500 .500 45 10.500 55 38 27.500Z" />
        </svg>
      </div>
      <div className="flex justify-end pr-[6px] pt-2">
        <span className="flex h-11 w-12 justify-center rounded-[6px] border-2 border-[#ccc] bg-white pt-[6px]">
          <svg className="h-6 w-6" viewBox="0 0 24 24" fill="#333">
            <path d="M14 0H24V10L21 7 16.500 11.500 12.500 7.500 17 3ZM0 14 3 17 7.500 12.500 11.500 16.500 7 21 10 24H0Z" />
          </svg>
        </span>
      </div>
      <div className="ml-[60px] mt-[30px]">
        <ProteinRibbon />
      </div>
    </div>
  );
}

/* ---------- Entry details ---------- */

function Label({ children }: { children: React.ReactNode }) {
  return <span className="font-bold tracking-[-0.22px]">{children}</span>;
}

function Link({ children }: { children: React.ReactNode }) {
  return <span className="font-bold tracking-[-0.09px] text-[#337ab7] underline decoration-2 underline-offset-[2px]">{children}</span>;
}

function ValidationChart() {
  return (
    <svg className="h-[140px] w-[760px] font-['DejaVu_Sans',sans-serif]" viewBox="1550 1368 760 140">
      <defs>
        <linearGradient id="rank" gradientUnits="userSpaceOnUse" x1="1805" y1="0" x2="2320" y2="0">
          <stop offset="0" stopColor="#ff0a14" />
          <stop offset="0.150" stopColor="#ff7d7d" />
          <stop offset="0.310" stopColor="#ffd0d0" />
          <stop offset="0.500" stopColor="#eeeeee" />
          <stop offset="0.690" stopColor="#d0d0ff" />
          <stop offset="0.870" stopColor="#7070ff" />
          <stop offset="1" stopColor="#1010ff" />
        </linearGradient>
      </defs>
      <g fill="#000">
        <text x="1731" y="1394.500" fontSize="24.300">Metric</text>
        <text x="1962" y="1394.500" fontSize="24.300">Percentile Ranks</text>
        <g fontSize="20.700" textAnchor="end">
          <text x="1797" y="1435">Clashscore</text>
          <text x="1797" y="1478">Ramachandran outliers</text>
        </g>
      </g>
      <path d="M1805 1418H2320V1435.500H1805ZM1805 1461H2320V1478.500H1805Z" fill="url(#rank)" />
      <path d="M2187 1435.500L1967 1461M1967 1479L2020 1497" stroke="#000" strokeWidth="1.500" />
      <rect x="2187" y="1415" width="10.500" height="24.500" fill="#fff" stroke="#000" strokeWidth="1.500" />
      <rect x="2186" y="1414" width="7" height="26" fill="#000" />
      <rect x="1930" y="1458" width="5" height="24" fill="#ffc0c0" stroke="#000" strokeWidth="1.500" />
      <rect x="1961" y="1457" width="7" height="25.500" fill="#000" />
    </svg>
  );
}

function EntryDetails() {
  return (
    <div className="flex w-[1460px] shrink-0 flex-col pl-[60px] text-[28px] leading-[40px] text-[#333]">
      <div className="flex h-[121px] justify-between">
        <h1 className="pt-[41px] text-[72px] leading-[80px] tracking-[0.2px] [-webkit-text-stroke:2px]">1A09</h1>
        <div className="flex h-[60px] w-[388px] shrink-0 text-[24px]">
          <span className="flex w-[226px] shrink-0 items-center rounded-l-[6px] border-2 border-r-0 border-[#ccc] bg-white pl-[19px]">
            <svg className="mb-[2px] h-6 w-[21px]" viewBox="0 0 21 24" fill="#333">
              <path d="M0 1Q0 0 1 0H12.500V8.500H21V23Q21 24 20 24H1Q0 24 0 23ZM14.500 0 21 6.500H14.500Z" />
            </svg>
            <span className="ml-[6px] mr-px whitespace-nowrap">Display Files</span>
            <Caret className="ml-[5px] mt-[3px]" />
          </span>
          <span className="flex w-[240px] shrink-0 items-center border-2 border-[#1c3f63] bg-[#33597d] pl-5 text-white">
            <svg className="mb-[4px] h-6 w-6 shrink-0" viewBox="0 0 24 24">
              <circle cx="12" cy="12" r="10.300" fill="none" stroke="#fff" strokeWidth="3.200" />
              <path d="M9.800 5.500H14.200V11.500H18L12 18.300 6 11.500H9.800Z" fill="#fff" />
            </svg>
            <span className="ml-[7px] whitespace-nowrap">Download Files</span>
          </span>
        </div>
      </div>
      <h2 className="mt-[17px] whitespace-nowrap text-[36px] leading-[40px] tracking-[0.7px] [-webkit-text-stroke:0.8px]">
        <span className="tracking-[0.45px]">C-src (SH2 domain)</span> complexed with ace-formyl{" "}
        <span className="tracking-[0.85px]">phosphotyr-glu-(n,n-dipentyl amine)</span>
      </h2>
      <p className="mt-[19px]">
        <Label>DOI:</Label> <span className="tracking-[0.43px] text-[#337ab7]">10.2210/pdb1A09/pdb</span>
      </p>
      <p className="mt-5">
        <b className="tracking-[-0.14px]">Classification:</b> <Link>COMPLEX (TRANSFERASE/PEPTIDE)</Link>
      </p>
      <p>
        <b className="tracking-[-0.42px]">Organism(s):</b> <Link>Homo sapiens</Link>
      </p>
      <p>
        <b className="tracking-[-0.3px]">Expression System:</b> <Link>Escherichia coli BL21</Link>
      </p>
      <p className="mt-10">
        <b className="tracking-[-0.1px]">Deposited:</b> <span className="tracking-[0.35px]">1997-12-10</span>{" "}
        <b className="tracking-[-0.1px]">Released:</b> <span className="tracking-[0.35px]">1998-04-08</span>
      </p>
      <p>
        <Label>Deposition Author(s):</Label> <Link>Shewchuk, L.</Link>, <Link>Jordan, S.</Link>
      </p>
      <hr className="mt-[19px] border-t-2 border-[#ddd]" />
      <div className="mt-5 flex">
        <section className="w-[650px] shrink-0 pt-px">
          <h3 className="font-bold">Experimental Data Snapshot</h3>
          <p className="mt-5">
            <b>Method:</b> <span className="tracking-[-0.5px]">X-RAY DIFFRACTION</span>
          </p>
          <p>
            <Label>Resolution:</Label> 2 Å
          </p>
          <p>
            <b>R-Value Work:</b> 0.198
          </p>
        </section>
        <section className="w-[760px] shrink-0">
          <div className="flex h-[60px] w-[700px] items-start justify-between">
            <h3 className="pt-px font-bold">wwPDB Validation</h3>
            <span className="flex h-11 w-[162px] items-center rounded-[6px] border-2 border-[#ccc] bg-white pl-[9px] text-[24px]">
              <svg className="h-[22px] w-[23px]" viewBox="0 0 23 22">
                <path d="M11.500 1 22 5.200V16.500L11.500 21 1 16.500V5.200Z" fill="#fff" stroke="#333" strokeWidth="1.800" strokeLinejoin="round" />
                <path d="M1 5.200 11.500 9.500V21L1 16.500Z" fill="#333" />
                <path d="M11.500 9.500 22 5.200" stroke="#333" strokeWidth="1.800" />
              </svg>
              <span className="ml-[7px] whitespace-nowrap">3D Report</span>
            </span>
          </div>
          <div className="overflow-hidden rounded-tl-[8px] border-2 border-[#ddd] bg-white">
            <ValidationChart />
          </div>
        </section>
      </div>
    </div>
  );
}

export default function App() {
  return (
    <div className={`flex h-[1492px] w-[2254px] flex-col overflow-hidden bg-white ${SANS}`}>
      <TabStrip />
      <Toolbar />
      <BookmarkBar />
      <NavBar />
      <SiteHeader />
      <StructureTabs />
      <main className="ml-[118px] mt-10 flex">
        <AssemblyPanel />
        <EntryDetails />
      </main>
    </div>
  );
}
